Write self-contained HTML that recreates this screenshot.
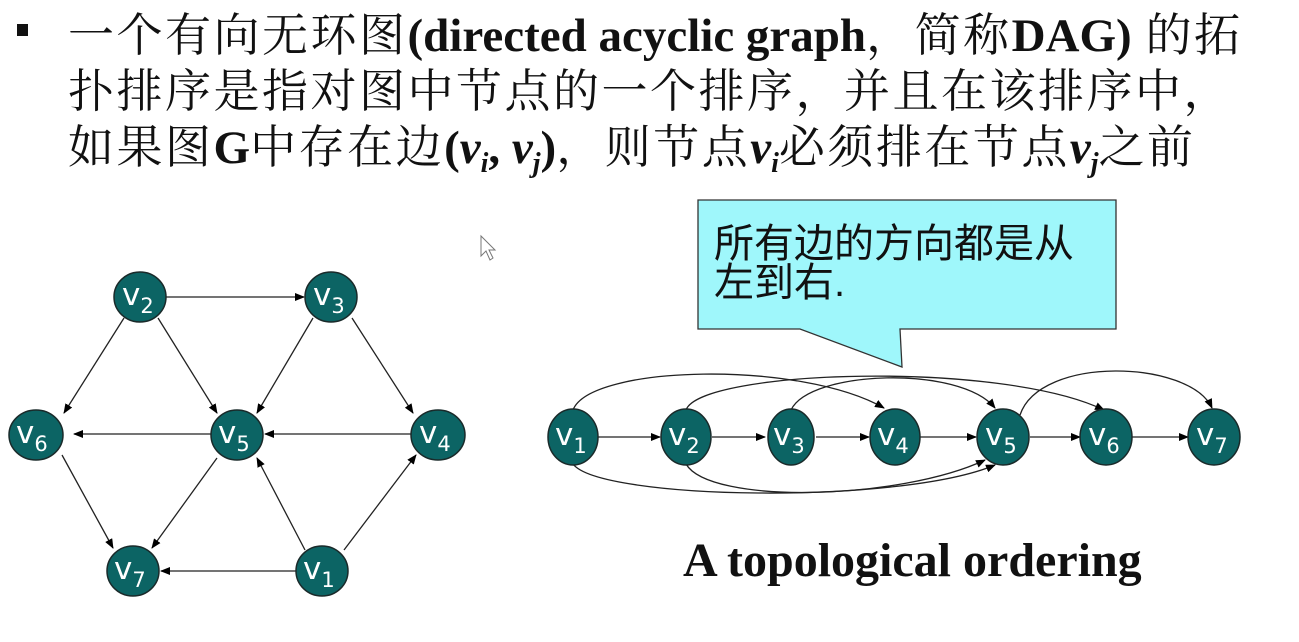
<!DOCTYPE html>
<html><head><meta charset="utf-8"><style>
body{margin:0;width:1299px;height:642px;background:#fff;overflow:hidden;position:relative;font-family:"Liberation Serif","Noto Serif CJK SC",serif;}
.l{position:absolute;left:68px;font-size:46px;color:#111;white-space:nowrap;line-height:1;letter-spacing:2.5px}
b{font-weight:bold;font-size:47px;letter-spacing:0}
i{font-style:italic;font-weight:bold;font-size:47px;letter-spacing:0}
sub{font-size:28px;vertical-align:-9px;line-height:0}
</style></head><body>
<div style="position:absolute;left:17px;top:24px;width:11px;height:12px;background:#111"></div>
<div class="l" style="top:13px">一个有向无环图<b>(directed acyclic graph</b>，简称<b>DAG)</b> 的拓</div>
<div class="l" style="top:69px">扑排序是指对图中节点的一个排序，并且在该排序中，</div>
<div class="l" style="top:125px">如果图<b>G</b>中存在边<b>(</b><i>v<sub>i</sub></i><b>, </b><i>v<sub>j</sub></i><b>)</b>，则节点<i>v<sub>i</sub></i>必须排在节点<i>v<sub>j</sub></i>之前</div>
<svg width="1299" height="642" style="position:absolute;left:0;top:0">
<defs><marker id="a" markerWidth="10" markerHeight="8" refX="9" refY="4" orient="auto" markerUnits="userSpaceOnUse"><path d="M0,0L10,4L0,8z" fill="#000"/></marker></defs>
<g stroke="#222" stroke-width="1.3" fill="none" marker-end="url(#a)">
<line x1="166" y1="297" x2="304" y2="297"/>
<line x1="124" y1="318" x2="64" y2="413"/>
<line x1="158" y1="318" x2="217" y2="413"/>
<line x1="313" y1="318" x2="257" y2="413"/>
<line x1="352" y1="318" x2="413" y2="413"/>
<line x1="211" y1="434" x2="74" y2="434"/>
<line x1="411" y1="434" x2="265" y2="434"/>
<line x1="62" y1="455" x2="113" y2="548"/>
<line x1="217" y1="458" x2="152" y2="548"/>
<line x1="297" y1="571" x2="161" y2="571"/>
<line x1="305" y1="550" x2="257" y2="458"/>
<line x1="344" y1="550" x2="416" y2="455"/>
<line x1="598" y1="437" x2="660" y2="437"/><line x1="712" y1="437" x2="765" y2="437"/>
<line x1="816" y1="437" x2="869" y2="437"/><line x1="920" y1="437" x2="976" y2="437"/>
<line x1="1030" y1="437" x2="1080" y2="437"/><line x1="1132" y1="437" x2="1188" y2="437"/>
<path d="M573,410 C590,365 800,360 884,408"/>
<path d="M686,410 C700,370 1000,360 1104,410"/>
<path d="M791,410 C810,370 960,365 995,408"/>
<path d="M1020,415 C1040,355 1190,360 1212,408"/>
<path d="M573,464 C600,500 900,505 995,465"/>
<path d="M686,464 C710,505 900,500 985,460"/>
</g>
<path d="M698,200 H1116 V329 H900 L902,367 L800,329 H698 Z" fill="#9ff7fb" stroke="#333" stroke-width="1.3"/>
<g fill="#0c6464" stroke="#1a2a2a" stroke-width="1.5">
<ellipse cx="140" cy="297" rx="26" ry="25"/><ellipse cx="331" cy="297" rx="26" ry="25"/>
<ellipse cx="36" cy="435" rx="27" ry="25"/><ellipse cx="237" cy="435" rx="26" ry="25"/>
<ellipse cx="438" cy="435" rx="27" ry="25"/><ellipse cx="133" cy="571" rx="26" ry="25"/>
<ellipse cx="322" cy="571" rx="26" ry="25"/>
<ellipse cx="573" cy="437" rx="25" ry="28"/><ellipse cx="686" cy="437" rx="25" ry="28"/>
<ellipse cx="791" cy="437" rx="23" ry="28"/><ellipse cx="895" cy="437" rx="25" ry="28"/>
<ellipse cx="1003" cy="437" rx="26" ry="28"/><ellipse cx="1106" cy="437" rx="26" ry="28"/>
<ellipse cx="1214" cy="437" rx="26" ry="28"/>
</g>
<g fill="#fff" font-family="DejaVu Sans,sans-serif" font-size="31">
<text x="122" y="305">v<tspan font-size="21" dy="8">2</tspan></text>
<text x="313" y="305">v<tspan font-size="21" dy="8">3</tspan></text>
<text x="16" y="443">v<tspan font-size="21" dy="8">6</tspan></text>
<text x="218" y="443">v<tspan font-size="21" dy="8">5</tspan></text>
<text x="419" y="443">v<tspan font-size="21" dy="8">4</tspan></text>
<text x="114" y="579">v<tspan font-size="21" dy="8">7</tspan></text>
<text x="303" y="579">v<tspan font-size="21" dy="8">1</tspan></text>
<text x="555" y="445">v<tspan font-size="21" dy="8">1</tspan></text>
<text x="668" y="445">v<tspan font-size="21" dy="8">2</tspan></text>
<text x="773" y="445">v<tspan font-size="21" dy="8">3</tspan></text>
<text x="877" y="445">v<tspan font-size="21" dy="8">4</tspan></text>
<text x="985" y="445">v<tspan font-size="21" dy="8">5</tspan></text>
<text x="1088" y="445">v<tspan font-size="21" dy="8">6</tspan></text>
<text x="1196" y="445">v<tspan font-size="21" dy="8">7</tspan></text>
</g>
<g font-family="Liberation Sans,Noto Sans CJK SC,sans-serif" font-size="40" fill="#111">
<text x="714" y="257">所有边的方向都是从</text>
<text x="714" y="296">左到右.</text>
</g>
<text x="683" y="576" font-family="Liberation Serif,serif" font-weight="bold" font-size="48" fill="#111">A topological ordering</text>
<path d="M481,236 V256 L486,251 L490,260 L493,258 L489,250 L495,250 Z" fill="#fff" stroke="#777" stroke-width="1"/>
</svg>
</body></html>
